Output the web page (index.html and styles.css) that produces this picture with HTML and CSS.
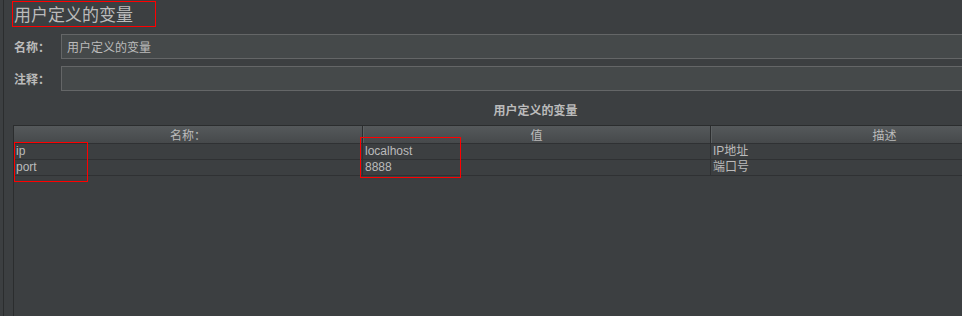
FILE: index.html
```html
<!DOCTYPE html>
<html lang="zh-CN">
<head>
	<meta charset="UTF-8">
	<title>用户定义的变量</title>
	<link rel="stylesheet" href="styles.css">
</head>
<body>
	<div class="frame">
		<div class="titleRow">
			<h1 class="title">用户定义的变量</h1>
		</div>
		<div class="field">
			<label class="fieldLabel">名称：</label>
			<div class="fieldInput">用户定义的变量</div>
		</div>
		<div class="field">
			<label class="fieldLabel">注释：</label>
			<div class="fieldInput"></div>
		</div>
		<div class="tablePane">
			<div class="caption">用户定义的变量</div>
			<div class="gridWrap">
				<div class="grid">
					<div class="head">名称：</div>
					<div class="head">值</div>
					<div class="head">描述</div>
					<div class="cell">ip</div>
					<div class="cell">localhost</div>
					<div class="cell">IP地址</div>
					<div class="cell">port</div>
					<div class="cell">8888</div>
					<div class="cell">端口号</div>
				</div>
				<!-- 标注框 -->
				<div class="mark markName"></div>
				<div class="mark markValue"></div>
			</div>
		</div>
	</div>
</body>
</html>
```

FILE: styles.css
```css
html, body{
	margin: 0;
	height: 100%;
	overflow: hidden;
	background: #3c3f41;
}
body{
	font-family: "Liberation Sans", "Noto Sans CJK SC", sans-serif;
	font-size: 12px;
	color: #bbbbbb;
}
.frame{
	margin-left: 3px;
	border-left: 1px solid #2b2d2e;
	height: 100%;
	padding-left: 10px;
	display: flex;
	flex-direction: column;
	box-sizing: border-box;
}
.titleRow{
	padding-top: 1px;
	height: 26px;
}
.title{
	display: inline-block;
	margin: 0 0 0 -2px;
	padding: 0 22px 0 1px;
	height: 24px;
	line-height: 24px;
	font-size: 17px;
	font-weight: normal;
	color: #bbbbbb;
	border: 1px solid #ff0000;
	font-family: "Noto Sans CJK SC", sans-serif;
}
.field{
	display: flex;
	align-items: center;
	margin-top: 7px;
	height: 25px;
}
.fieldLabel{
	width: 47px;
	font-weight: bold;
	font-family: "Noto Sans CJK SC", sans-serif;
}
.fieldInput{
	flex: 1;
	height: 23px;
	line-height: 23px;
	padding-left: 5px;
	background: #45494a;
	border: 1px solid #646667;
	border-right: none;
	font-family: "Noto Sans CJK SC", sans-serif;
}
.tablePane{
	flex: 1;
	display: flex;
	flex-direction: column;
	overflow: hidden;
	margin-left: -1px;
}
.caption{
	width: 1045px;
	text-align: center;
	font-weight: bold;
	font-family: "Noto Sans CJK SC", sans-serif;
	margin-top: 10px;
	height: 24px;
	line-height: 18px;
}
.gridWrap{
	flex: 1;
	position: relative;
	border-left: 1px solid #2b2d2e;
	width: 1044px;
}
.grid{
	display: grid;
	grid-template-columns: 348px 348px 1fr;
	border-top: 1px solid #2b2d2e;
}
.head{
	height: 17px;
	line-height: 17px;
	text-align: center;
	background: linear-gradient(#55595b, #46494b);
	border-left: 1px solid #2b2d2e;
	border-bottom: 1px solid #2f3133;
	box-shadow: inset 1px 0 0 #5d6163;
	font-family: "Noto Sans CJK SC", sans-serif;
}
.head:first-child{
	border-left: none;
	box-shadow: none;
}
.cell{
	height: 15px;
	line-height: 15px;
	padding-left: 2px;
	border-bottom: 1px solid #2f3133;
	border-left: 1px solid #2f3133;
	color: #bbbbbb;
}
.cell:nth-child(3n+1){
	border-left: none;
}
.mark{
	position: absolute;
	border: 1px solid #ff0000;
}
.markName{
	left: 0;
	top: 17px;
	width: 72px;
	height: 38px;
}
.markValue{
	left: 346px;
	top: 12px;
	width: 99px;
	height: 39px;
}
```
